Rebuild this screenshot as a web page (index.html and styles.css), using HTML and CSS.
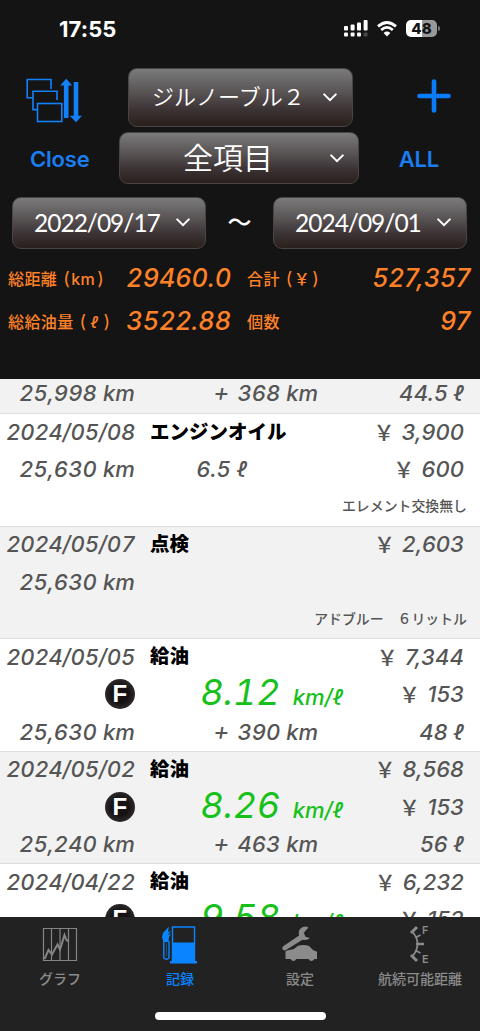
FILE: index.html
```
<!DOCTYPE html>
<html lang="ja">

<head>
    <meta charset="UTF-8">
    <meta name="viewport" content="width=device-width, initial-scale=1.0">
    <title>記録</title>
    <link rel="stylesheet" href="styles.css">
</head>

<body>
    <header class="header">
        <div class="status_bar">
            <span class="time">17:55</span>
            <div class="status_icons">
                <svg class="signal" width="24" height="17" viewBox="0 0 24 17" fill="#fff">
                    <rect x="0" y="6" width="4" height="4.5" rx="1" />
                    <rect x="6.6" y="4.5" width="4" height="6" rx="1" />
                    <rect x="13" y="2.5" width="4" height="8" rx="1" />
                    <rect x="19.6" y="0" width="4" height="10.5" rx="1" />
                    <rect x="0" y="12.5" width="4" height="4" rx="1" />
                    <rect x="6.6" y="12.5" width="4" height="4" rx="1" />
                    <rect x="13" y="12.5" width="4" height="4" rx="1" />
                    <rect x="19.6" y="12.5" width="4" height="4" rx="1" fill="#484848" />
                </svg>
                <svg class="wifi" width="20" height="16" viewBox="0 0 20 16" fill="none" stroke="#fff" stroke-width="2.8">
                    <path d="M1 5.4Q10-2.4 19 5.4" />
                    <path d="M4.2 9Q10 3.8 15.8 9" />
                    <path d="M10 15.6L6.6 11.9Q10 9 13.4 11.9Z" fill="#fff" stroke="none" />
                </svg>
                <span class="battery">48</span>
                <span class="battery_tip"></span>
            </div>
        </div>

        <div class="car_row">
            <svg class="sort_icon" width="56" height="46" viewBox="0 0 56 46" fill="none" stroke="#1480f8" stroke-width="1.6">
                <path d="M7 19.8H1.2V1.5H25V11" />
                <path d="M12 31.6H7V13.2H31V22" />
                <rect x="11.5" y="25.5" width="24.3" height="18" />
                <path d="M40.2 40V6M50 4v34" stroke-width="4.6" />
                <path d="M34.2 7.5L40.2.8l6 6.7zM43.8 37.8L50 44.2l6-6.4z" fill="#1480f8" stroke="none" />
            </svg>
            <a class="select select_car"><span>ジルノーブル２</span>
                <svg class="chevron" viewBox="0 0 14 9"><path d="M1.2 1.4L7 7.2l5.8-5.8" /></svg></a>
            <svg class="plus_icon" width="34" height="34" viewBox="0 0 34 34" stroke="#0a7cfa" stroke-width="4.6" stroke-linecap="round">
                <path d="M17 2.5v29M2.5 17h29" />
            </svg>
        </div>
        <div class="item_row">
            <a class="link link_close">Close</a>
            <a class="select select_item"><span>全項目</span>
                <svg class="chevron" viewBox="0 0 14 9"><path d="M1.2 1.4L7 7.2l5.8-5.8" /></svg></a>
            <a class="link link_all">ALL</a>
        </div>
        <div class="date_row">
            <a class="select select_date"><span>2022/09/17</span>
                <svg class="chevron" viewBox="0 0 14 9"><path d="M1.2 1.4L7 7.2l5.8-5.8" /></svg></a>
            <span class="tilde">〜</span>
            <a class="select select_date"><span>2024/09/01</span>
                <svg class="chevron" viewBox="0 0 14 9"><path d="M1.2 1.4L7 7.2l5.8-5.8" /></svg></a>
        </div>

        <div class="totals">
            <span class="total_label">総距離<i class="paren">(</i>km<i class="paren">)</i></span>
            <span class="total_value">29460.0</span>
            <span class="total_label label_right">合計<i class="paren">(</i>￥<i class="paren">)</i></span>
            <span class="total_value value_right">527,357</span>
            <span class="total_label">総給油量<i class="paren">(</i><i class="liter">ℓ</i><i class="paren">)</i></span>
            <span class="total_value">3522.88</span>
            <span class="total_label label_right">個数</span>
            <span class="total_value value_right">97</span>
        </div>
    </header>

    <main class="records">
        <section class="record record_first gray">
            <span class="left">25,998 km</span>
            <span class="trip"><i class="plus">+</i>368 km</span>
            <span class="right">44.5 ℓ</span>
        </section>
        <section class="record">
            <span class="left date">2024/05/08</span>
            <span class="title">エンジンオイル</span>
            <span class="right"><i class="yen">￥</i>3,900</span>
            <span class="left">25,630 km</span>
            <span class="amount">6.5 ℓ</span>
            <span class="right"><i class="yen">￥</i>600</span>
            <span class="memo">エレメント交換無し</span>
        </section>
        <section class="record gray">
            <span class="left date">2024/05/07</span>
            <span class="title">点検</span>
            <span class="right"><i class="yen">￥</i>2,603</span>
            <span class="left">25,630 km</span>
            <span></span>
            <span></span>
            <span class="memo">アドブルー　６リットル</span>
        </section>
        <section class="record">
            <span class="left date">2024/05/05</span>
            <span class="title">給油</span>
            <span class="right"><i class="yen">￥</i>7,344</span>
            <span class="left"><b class="full">F</b></span>
            <span class="mileage">8.12 <small>km/ℓ</small></span>
            <span class="right"><i class="yen">￥</i>153</span>
            <span class="left">25,630 km</span>
            <span class="trip"><i class="plus">+</i>390 km</span>
            <span class="right">48 ℓ</span>
        </section>
        <section class="record gray">
            <span class="left date">2024/05/02</span>
            <span class="title">給油</span>
            <span class="right"><i class="yen">￥</i>8,568</span>
            <span class="left"><b class="full">F</b></span>
            <span class="mileage">8.26 <small>km/ℓ</small></span>
            <span class="right"><i class="yen">￥</i>153</span>
            <span class="left">25,240 km</span>
            <span class="trip"><i class="plus">+</i>463 km</span>
            <span class="right">56 ℓ</span>
        </section>
        <section class="record">
            <span class="left date">2024/04/22</span>
            <span class="title">給油</span>
            <span class="right"><i class="yen">￥</i>6,232</span>
            <span class="left"><b class="full">F</b></span>
            <span class="mileage">9.58 <small>km/ℓ</small></span>
            <span class="right"><i class="yen">￥</i>153</span>
        </section>
    </main>

    <footer class="footer">
        <nav class="tabs">
            <a class="tab">
                <svg width="40" height="40" viewBox="0 0 40 40" fill="none" stroke="#858585">
                    <path d="M3.500 3.500h33v32h-33zM11.500 3.500v32M20 3.500v32M28.500 3.500v32" stroke-width="1.2" />
                    <path d="M4.500 34l4-9 3.500 4.500 5.500-10 2.500 5L24.500 10l2 5 2 1.500" stroke-width="2" />
                </svg>
                <span>グラフ</span>
            </a>
            <a class="tab active">
                <svg width="40" height="40" viewBox="0 0 40 40" fill="none" stroke="#0a84ff" stroke-width="1.4">
                    <path d="M12.500 36V2h22v34" />
                    <path d="M12.500 17.500h22V36h2.500v2.500H10V36h2.500z" fill="#0a84ff" stroke="none" />
                    <path d="M9 1.500L3 8l-1 4 1.500 5h5l.5-5 2-3-3 1 3-4-3 1z" fill="#0a84ff" stroke="none" />
                    <path d="M3.800 16v17q2.600 2.500 5.200 0V16" />
                    <path d="M6.400 18v13" stroke-width=".5" />
                </svg>
                <span>記録</span>
            </a>
            <a class="tab">
                <svg width="40" height="40" viewBox="0 0 40 40" fill="#8b8b8b">
                    <path d="M28.500 2.500q-4-2.400-7.700.8-3 3-1.700 7.200L3.200 21.300q-2 1.700-.3 3.400 1.800 1.500 3.500 0l16.100-10q4.800 1.200 7.500-1.700l-4.500-1.200-1.700-4z" />
                    <path d="M5.500 34v-7.500q1-1.500 8-2.200l4.500-3.500q6-1.500 11 .2l4 4 4 1.700V34h-2.500q-3 4-6 0h-12q-3 4-6 0z" />
                </svg>
                <span>設定</span>
            </a>
            <a class="tab">
                <svg width="40" height="40" viewBox="0 0 40 40" fill="none" stroke="#8b8b8b">
                    <path d="M17 2l-6 6M17 36l-6-6" stroke-width="3" />
                    <path d="M12.500 7q5 5.500 5 12T12.500 31M15.500 12.500l5-2.500M15.500 25.500l5 2.500" stroke-width="1.800" />
                    <path d="M16 19h8" stroke-width="2.500" />
                    <text class="gauge" x="22" y="9">F</text>
                    <text class="gauge" x="22" y="37.500">E</text>
                </svg>
                <span>航続可能距離</span>
            </a>
        </nav>
        <div class="home_bar"></div>
    </footer>
</body>

</html>
```

FILE: styles.css
```
* {
    margin: 0;
    padding: 0;
    box-sizing: border-box;
}

body {
    width: 480px;
    height: 1031px;
    display: flex;
    flex-direction: column;
    overflow: hidden;
    background: #fff;
    font-family: Inter, "Noto Sans CJK JP", sans-serif;
}

.header {
    height: 379px;
    flex: none;
    background: #141414;
    color: #fff;
}

/* status bar */
.status_bar {
    height: 68px;
    padding: 0 40px 11px 59px;
    display: flex;
    align-items: center;
    justify-content: space-between;
}

.time {
    font-size: 22px;
    font-weight: 700;
    letter-spacing: 0.1px;
}

.status_icons {
    display: flex;
    align-items: center;
}

.wifi {
    margin: 0 9px 0 9px;
}

.battery {
    width: 31px;
    height: 17px;
    border-radius: 5px;
    background: linear-gradient(90deg, #fff 50%, #999 50%);
    color: #141414;
    font-size: 15px;
    font-weight: 800;
    line-height: 17px;
    text-align: center;
}

.battery_tip {
    width: 2px;
    height: 5px;
    margin-left: 1px;
    border-radius: 0 2px 2px 0;
    background: #777;
}

/* selectors */
.car_row {
    height: 64px;
    padding: 0 29px 0 26px;
    display: flex;
    align-items: flex-start;
}

.sort_icon {
    margin-top: 10px;
}

.plus_icon {
    margin: 11px 0 0 auto;
}

.select {
    display: flex;
    align-items: center;
    justify-content: space-between;
    border: 1px solid #4a4545;
    border-radius: 9px;
    background: linear-gradient(#7b7b7b, #554f50 45%, #3d3436 70%, #291f1c);
    white-space: nowrap;
}

.chevron {
    width: 14px;
    height: 9px;
    fill: none;
    stroke: #fff;
    stroke-width: 2;
    stroke-linecap: round;
}

.select_car {
    width: 225px;
    height: 59px;
    margin-left: 46px;
    padding: 0 15px 0 23px;
    font-size: 22px;
    font-weight: 350;
}

.select_car span {
    padding-bottom: 5px;
}

.item_row {
    height: 65px;
    padding: 0 41px 0 30px;
    display: flex;
    align-items: flex-start;
}

.select_item {
    width: 240px;
    height: 52px;
    padding: 0 14px 0 63px;
    font-size: 30px;
    font-weight: 350;
}

.select_item span {
    padding-bottom: 5px;
}

.link {
    color: #1a7df0;
    font-size: 22px;
    font-weight: 600;
    letter-spacing: -0.2px;
    line-height: 54px;
}

.link_close {
    width: 89px;
}

.link_all {
    margin-left: auto;
}

.date_row {
    height: 52px;
    padding: 0 13px 0 12px;
    display: flex;
    align-items: center;
    justify-content: space-between;
}

.select_date {
    width: 194px;
    height: 52px;
    padding: 0 15px 1px 21px;
    font-family: Lato, sans-serif;
    font-size: 24.5px;
    letter-spacing: -1px;
}

.tilde {
    padding-bottom: 5px;
    font-size: 24px;
    font-weight: 500;
}

/* totals */
.totals {
    padding: 8px 9px 0 8px;
    display: grid;
    grid-template-columns: 111px 112px 103px 1fr;
    grid-auto-rows: 43px;
    align-items: center;
    color: #ff8228;
    white-space: nowrap;
}

.total_label {
    padding-bottom: 2px;
    font-size: 16px;
    font-weight: 500;
    letter-spacing: 0.4px;
}

.label_right {
    padding-left: 16px;
}

.paren {
    padding: 0 1px 0 6px;
    font-size: 18px;
    font-style: normal;
    font-weight: 400;
}

.paren:last-child {
    padding: 0 0 0 2px;
}

.liter {
    padding: 0 3px;
}

.total_value {
    padding-bottom: 1px;
    font-size: 25.2px;
    font-style: italic;
    font-weight: 500;
    font-variant-numeric: tabular-nums;
    text-align: right;
}

.value_right {
    font-variant-numeric: normal;
    letter-spacing: 0.5px;
}

/* records */
.records {
    height: 538px;
    flex: none;
    overflow: hidden;
}

.record {
    height: 112.4px;
    padding-bottom: 1px;
    display: grid;
    grid-template-columns: 135px 208px 1fr;
    grid-template-rows: repeat(3, 37.4px);
    align-items: center;
    border-top: 1px solid #ddd;
    color: #555;
    font-size: 22px;
    font-style: italic;
    font-weight: 500;
    font-variant-numeric: tabular-nums;
    line-height: 35px;
    white-space: nowrap;
}

.record_first {
    height: 34.4px;
    grid-template-rows: 37.4px;
    align-content: end;
    border-top: 0;
}

.gray {
    background: #f2f2f2;
}

.left,
.trip,
.amount,
.right {
    padding-bottom: 1px;
    text-align: right;
}

.left {
    letter-spacing: 0.1px;
}

.date {
    letter-spacing: -0.15px;
}

.title {
    padding: 0 0 2px 15px;
    color: #000;
    font-size: 19.5px;
    font-style: normal;
    font-weight: 900;
}

.right {
    padding-right: 16px;
    font-variant-numeric: normal;
    letter-spacing: 0.1px;
}

.yen {
    margin-right: 7px;
    font-size: 21px;
    font-style: normal;
    line-height: 1;
}

.trip {
    padding-right: 25px;
}

.plus {
    margin-right: 8px;
    font-size: 25px;
    font-weight: 400;
    line-height: 1;
}

.amount {
    padding-right: 96px;
}

.memo {
    grid-column: 1 / 4;
    padding: 0 13px 2px 0;
    font-size: 13.9px;
    font-style: normal;
    text-align: right;
}

.mileage {
    color: #17c11c;
    font-size: 36px;
    font-weight: 400;
    text-align: right;
}

.mileage small {
    margin-left: 3px;
    font-size: 22px;
    font-weight: 500;
}

.full {
    width: 30px;
    height: 30px;
    margin-top: -4px;
    display: inline-block;
    border-radius: 50%;
    background: radial-gradient(#161214 40%, #443d40);
    color: #fff;
    font-family: "Liberation Sans", Arial, sans-serif;
    font-size: 24px;
    font-style: normal;
    font-weight: 700;
    line-height: 30px;
    text-align: center;
    vertical-align: middle;
}

/* tab bar */
.footer {
    height: 114px;
    flex: none;
    background: #222;
}

.tabs {
    height: 95px;
    padding-top: 8px;
    display: grid;
    grid-template-columns: repeat(4, 120px);
}

.tab {
    display: flex;
    flex-direction: column;
    align-items: center;
    color: #8b8b8b;
    font-size: 14px;
    font-weight: 500;
    line-height: 28px;
}

.active {
    color: #0a84ff;
}

.gauge {
    fill: #8b8b8b;
    stroke: none;
    font-size: 11px;
    font-weight: 600;
}

.home_bar {
    width: 171px;
    height: 8px;
    margin: 0 auto;
    border-radius: 4px;
    background: #fff;
}
```
